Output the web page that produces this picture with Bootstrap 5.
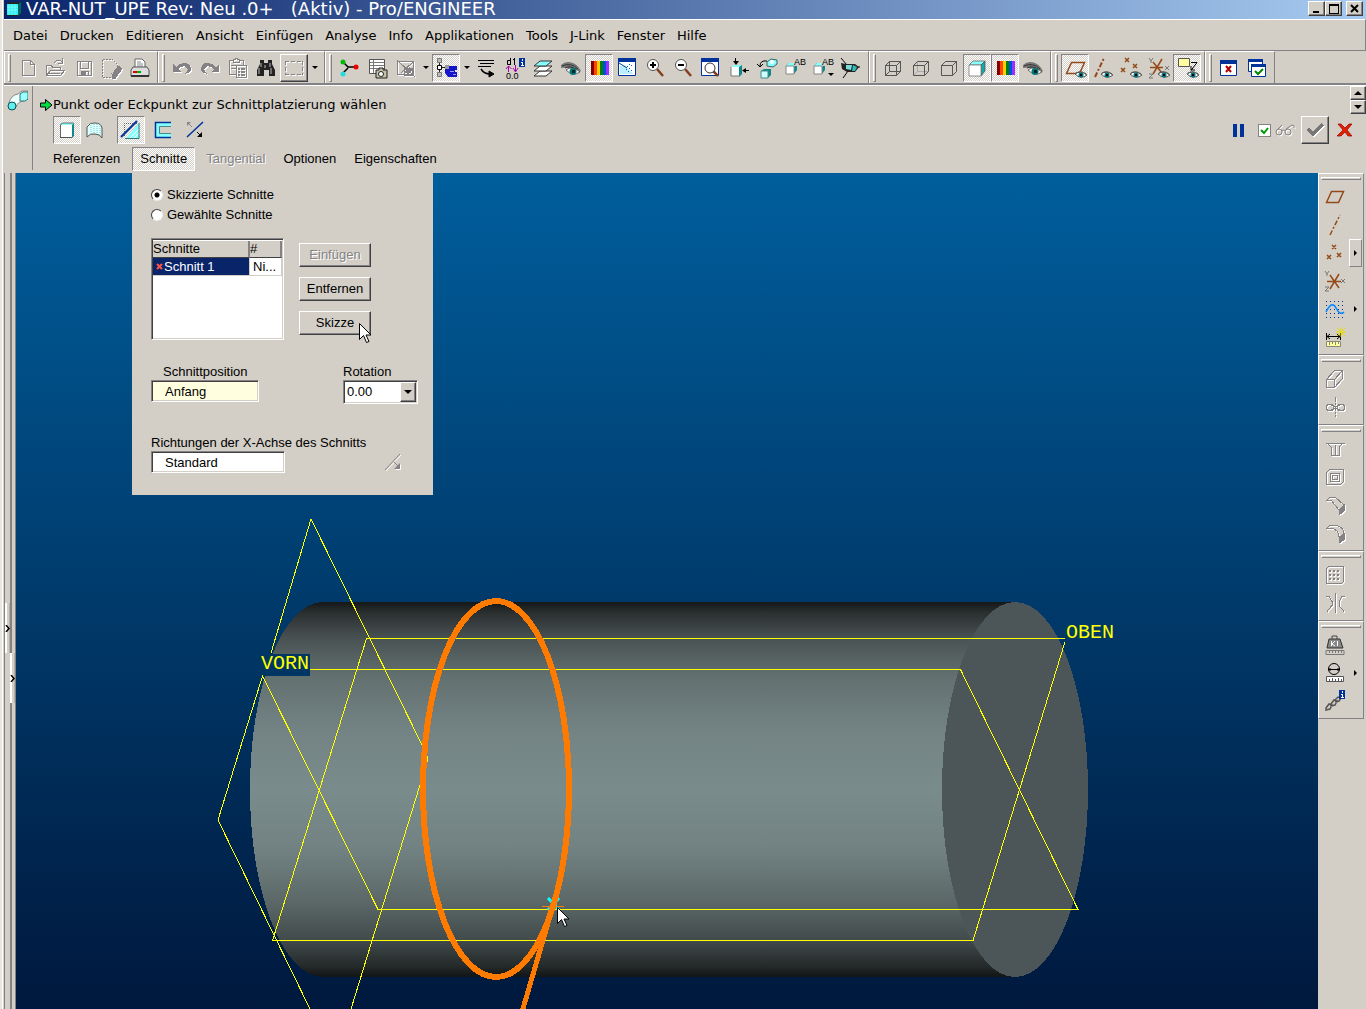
<!DOCTYPE html>
<html lang="de">
<head>
<meta charset="utf-8">
<meta name="viewport" content="width=device-width, initial-scale=1">
<title>VAR-NUT_UPE - Pro/ENGINEER</title>
<link rel="stylesheet" href="https://cdn.jsdelivr.net/npm/bootstrap@5.3.0/dist/css/bootstrap.min.css">
<style>
:root{--face:#d3cfc7;--dark:#848284;--deep:#404040;--navy:#0a246a}
body{background:var(--face);color:#000;font:13px/16px "Liberation Sans",Arial,sans-serif;overflow:hidden}
button{color:#000;padding:0;border:0;background:none;font:inherit}
.wide-face{font-family:"DejaVu Sans",Verdana,sans-serif}
.app-frame{padding-left:4px;box-shadow:inset 2px 0 0 #e8e6e0,inset 3px 0 0 #fff}
.title-strip{height:19px;background:linear-gradient(90deg,#0a246a,#a6caf0);color:#fff;padding:0 3px 2px 2px}
.title-strip h1{font-size:18px;line-height:17px;font-weight:400;white-space:pre;margin:0}
.win-btn{width:17px;height:15px}
.raised{background:var(--face);border:1px solid;border-color:#fff var(--deep) var(--deep) #fff;box-shadow:inset -1px -1px 0 var(--dark)}
.menu-strip{height:31px;border-top:1px solid #fff;border-right:1px solid var(--dark);padding:2px 0 0 3px}
.menu-strip a{color:#000;padding:0 6px;text-decoration:none}
.tool-strip{height:35px;border-top:1px solid var(--dark);border-bottom:2px solid var(--dark)}
.tool-set{border-top:1px solid #fff;border-right:1px solid var(--dark);border-left:1px solid #fff;padding-right:3px;margin:0}
.grip{width:9px;flex:none;padding:2px 3px}
.grip::before{content:"";display:block;width:3px;height:28px;border:1px solid;border-color:#fff var(--dark) var(--dark) #fff}
.tool{width:28px;height:28px;flex:none;display:flex;align-items:center;justify-content:center}
.tool svg{width:24px;height:24px;display:block}
.tool.off svg{shape-rendering:crispEdges}
.tool-drop{width:13px;height:28px;display:flex;align-items:center;justify-content:center}
.tool-drop .tri-d{border-width:3px;border-bottom:0}
.tri-d{border:4px solid transparent;border-top-color:#000;border-bottom:0}
.tri-u{border:4px solid transparent;border-bottom-color:#000;border-top:0}
.tri-r{border:4px solid transparent;border-left-color:#000;border-right:0}
.pressed{background:repeating-conic-gradient(#fff 0 25%,var(--face) 0 50%) 0 0/2px 2px;border:1px solid;border-color:var(--dark) #fff #fff var(--dark)}
.off svg,svg.off{filter:drop-shadow(1px 1px 0 #fff)}
.dash{height:88px;border-top:1px solid #fff}
.dash-side{width:29px;border-right:1px solid var(--dark);margin-bottom:3px;padding:3px 0}
.dash-main{padding:11px 0 0 7px}
.dash-row{height:28px;margin:3px 0 0 13px}
.dash-tabs{margin-top:3px;margin-left:4px;height:24px}
.dash-tabs button{height:24px;padding:0 9px}
.dash-tabs button.pressed{padding:0 7px;margin:0 2px 0 3px}
.ghost{color:var(--dark);text-shadow:1px 1px 0 #fff}
.dash-actions{height:28px;margin-top:30px;padding-right:5px}
.tick-box{appearance:none;width:13px;height:13px;margin:0;border:1px solid var(--dark);background:#fff}
.tick-wrap svg{pointer-events:none}
.spin{width:16px}
.spin button{width:16px;height:14px}
.rails{width:12px;flex:none;border-left:1px solid var(--dark);border-right:1px solid var(--dark)}
.rails::before{content:"";width:2px;height:100%;background:var(--dark);position:absolute;left:5px}
.rail-tab{width:5px;height:50px;background:linear-gradient(90deg,#fff 0 2px,var(--face) 2px 4px,#b5b0a0 4px)}
.rail-tab svg{width:5px;height:7px;display:block}
.rail-a{left:0;top:430px}
.rail-b{left:5px;top:480px}
.view{background:linear-gradient(#005e9c,#00183d)}
.view>svg{position:absolute;width:100%;height:100%}
.slide{left:116px;top:0;width:301px;background:var(--face);padding:12px 15px 22px 19px}
.pick{height:20px;gap:4px}
.pick input{appearance:none;width:12px;height:12px;margin:0;border-radius:50%;background:#fff;border:1px solid;border-color:var(--deep) #eee #eee var(--deep)}
.pick input:checked{background:radial-gradient(#000 0 2px,#fff 3px)}
.sunk{background:#fff;border:1px solid;border-color:var(--dark) #fff #fff var(--dark);box-shadow:inset 1px 1px 0 var(--deep),inset -1px -1px 0 var(--face)}
.sections{margin-top:13px;gap:15px}
.list-box{width:133px;height:102px;padding:2px 1px}
.list-box table{width:129px;table-layout:fixed;border-collapse:separate;border-spacing:0}
.list-box th{font-weight:400;height:17px;padding:0;background:var(--face);border-right:2px solid var(--dark);border-bottom:1px solid var(--deep)}
.list-box th:first-child{width:97px}
.list-box td{height:18px;padding:0 3px;border-right:1px solid var(--face);border-bottom:1px solid var(--face);white-space:nowrap}
.list-box td.picked{background:var(--navy);color:#fff}
.push-col{gap:10px;padding-top:5px}
.push{width:72px;height:24px;display:block}
.hover-arrow{right:0;top:12px}
.text-in{height:22px;padding:0 13px;border-radius:0;font:inherit}
.pos-in{width:108px;background:#ffffdf}
.dir-in{width:134px}
.dir-row{margin-top:31px}
.combo{width:75px;height:24px}
.combo select{appearance:none;width:100%;height:100%;padding:0 3px;border-radius:0;font:inherit;color:#000}
.combo .raised{right:2px;top:2px;width:16px;height:20px;pointer-events:none}
.flyout{width:48px;flex:none;padding-right:2px}
.side-set{border:1px solid;border-color:#fff var(--dark) var(--dark) #fff;padding-bottom:3px}
.side-grip{height:9px;padding:3px 2px}
.side-grip::before{content:"";display:block;height:3px;border:1px solid;border-color:#fff var(--dark) var(--dark) #fff}
.side-set .tool{margin-left:2px}
.more{width:13px;height:28px}
.more .tri-r{border-width:3px;border-right:0}
.more.raised{border-right-color:var(--dark);border-bottom-color:var(--dark);box-shadow:none}
.cad{font-family:"Liberation Mono",monospace;font-size:20px;fill:#ff0}
.ico{font-family:"Liberation Sans",sans-serif;font-size:9px}
</style>
</head>
<body>
<svg width="0" height="0" class="position-absolute" aria-hidden="true">
  <defs>
    <symbol id="eye" viewBox="0 0 24 24"><path d="M2 9Q7 4 14 7Q19 9 22 15L19 17Q12 11 2 12Z" fill="#777"/><path d="M3 10Q12 6 19 13M6 12Q11 9 18 14" stroke="#333" fill="none"/><path d="M7 14Q13 9 21 16Q14 21 7 14Z" fill="#fff" stroke="#333" stroke-width=".7"/><circle cx="14" cy="15.500" r="3.500" fill="#077"/><path d="M13 14h3v3h-3z" fill="#022"/></symbol>
    <symbol id="mini-eye" viewBox="0 0 12 8"><path d="M0 3Q5-1 12 4Q6 9 0 3Z" fill="#fff" stroke="#555"/><circle cx="6" cy="4" r="2.500" fill="#077"/><path d="M5 3h2v2H5z" fill="#002"/><path d="M1 2Q6-1 11 3" stroke="#555" fill="none"/></symbol>
    <symbol id="rainbow" viewBox="0 0 24 24"><path d="M4 5h3v14H4z" fill="#840000"/><path d="M7 5h3v14H7z" fill="#f40"/><path d="M10 5h3v14h-3z" fill="#ffce00"/><path d="M13 5h3v14h-3z" fill="#008200"/><path d="M16 5h3v14h-3z" fill="#0050e0"/><path d="M19 5h3v14h-3z" fill="#9a30ff"/></symbol>
    <symbol id="solid" viewBox="0 0 24 24"><path d="M4 9l4-4h12l-4 4z" fill="#8ff" stroke="#666" stroke-width=".8"/><path d="M16 9l4-4v10l-4 5z" fill="#1aa" stroke="#555" stroke-width=".8"/><path d="M4 9h12v11H4z" fill="#fff" stroke="#777" stroke-width=".8"/></symbol>
    <symbol id="info-tag" viewBox="0 0 6 9"><path d="M0 0h6v9H0z" fill="#003399"/><path d="M3 1h1v2H3zM2 4h2v3h1v1H2V7h1V5H2z" fill="#fff"/></symbol>
    <symbol id="pointer" viewBox="0 0 12 20"><path d="M.5.5v16l4-4 3 7 2.500-1-3-6.500h5z" fill="#fff" stroke="#000"/></symbol>
  </defs>
</svg>

<div class="app-frame vh-100 d-flex flex-column">
  <header class="title-strip wide-face d-flex align-items-center">
    <svg width="16" height="16" class="me-1" aria-hidden="true"><path d="M1 3l3-2h11v11l-3 3H1z" fill="#222"/><path d="M1 3h11v11H1z" fill="#3ee"/><path d="M12 3l3-2v11l-3 3z" fill="#066"/><path d="M3 3v11M6 3v11M9 3v11M1 6h11M1 9h11" stroke="#9ff" stroke-width=".6"/></svg>
    <h1>VAR-NUT_UPE Rev: Neu .0+   (Aktiv) - Pro/ENGINEER</h1>
    <div class="d-flex ms-auto">
      <button class="win-btn raised d-flex" aria-label="Minimieren"><svg width="15" height="13"><path d="M4 9h6v2H4z"/></svg></button>
      <button class="win-btn raised d-flex" aria-label="Maximieren"><svg width="15" height="13" shape-rendering="crispEdges"><path d="M3 2h9v9H3zM3 3h9" fill="none" stroke="#000"/></svg></button>
      <button class="win-btn raised d-flex ms-1" aria-label="Schließen"><svg width="15" height="13"><path d="M4 3l7 7M11 3l-7 7" stroke="#000" stroke-width="2"/></svg></button>
    </div>
  </header>

  <nav class="menu-strip wide-face d-flex align-items-center" aria-label="Menü">
    <a href="#">Datei</a><a href="#">Drucken</a><a href="#">Editieren</a><a href="#">Ansicht</a><a href="#">Einfügen</a><a href="#">Analyse</a><a href="#">Info</a><a href="#">Applikationen</a><a href="#">Tools</a><a href="#">J-Link</a><a href="#">Fenster</a><a href="#">Hilfe</a>
  </nav>

  <div class="tool-strip d-flex" role="toolbar" aria-label="Werkzeuge">
    <div class="tool-set d-flex align-items-center"><span class="grip"></span>
      <button class="tool off" aria-label="Neu"><svg viewBox="0 0 24 24" fill="none" stroke="#848284"><path d="M6.500 4.500h8l4 4v11h-12zM14.500 4.500v4h4"/></svg></button>
      <button class="tool off" aria-label="Öffnen"><svg viewBox="0 0 24 24" fill="none" stroke="#848284"><path d="M2.500 19.500v-10h5l1 2h8v3M2.500 19.500l4-5h14l-4 5zM10 7q4-5 8-1M18.500 2v5h-5M5 17h11"/></svg></button>
      <button class="tool off" aria-label="Speichern"><svg viewBox="0 0 24 24" fill="none" stroke="#848284"><path d="M5.500 5.500h14v14h-14z"/><path d="M8.500 5.500v7h8v-7M9 15.500h7v4H9z"/><path d="M10 16h3v3h-3z" fill="#848284"/></svg></button>
      <button class="tool off" aria-label="Löschen"><svg viewBox="0 0 24 24" fill="none" stroke="#848284"><path d="M2.500 3.500h10l5 5v3M2.500 3.500v18h10" stroke-dasharray="2 1"/><path d="M13 17l6-7 3 3-6 8z" fill="#848284"/><path d="M12 18l4 4-3 1z" fill="#848284"/></svg></button>
      <button class="tool" aria-label="Drucken"><svg viewBox="0 0 24 24"><path d="M7 12V3h7l3 3v6z" fill="#fff" stroke="#666"/><path d="M9 6h4M9 8h6M9 10h6" stroke="#888"/><path d="M5 11h14l2 3v6H3v-6z" fill="#ddd" stroke="#555"/><path d="M3 19h18v2H3z" fill="#333"/><path d="M5 15h4v2H5z" fill="#d00"/><path d="M9 15h4v2H9z" fill="#0a0"/></svg></button>
    </div>
    <div class="tool-set d-flex align-items-center"><span class="grip"></span>
      <button class="tool off" aria-label="Rückgängig"><svg viewBox="0 0 24 24"><path d="M3 8v8h8l-3-3q6-5 9-1 2 3-3 6 7-1 7-5-1-7-8-6-4 1-7 4z" fill="#848284"/></svg></button>
      <button class="tool off" aria-label="Wiederholen"><svg viewBox="0 0 24 24"><path d="M21 8v8h-8l3-3q-6-5-9-1-2 3 3 6-7-1-7-5 1-7 8-6 4 1 7 4z" fill="#848284"/></svg></button>
      <button class="tool off" aria-label="Einfügen"><svg viewBox="0 0 24 24" fill="none" stroke="#848284"><path d="M10 18.500H3.500v-14H7M14 4.500h3.500V9M7.500 6.500v-3h2v-1h2v1h2v3zM5 9.500h8M5 12.500h5"/><path d="M10.500 9.500h10v12h-10z"/><path d="M12 13h2M15 13h4M12 16h2M15 16h4M12 19h2M15 19h4" stroke-width="2"/></svg></button>
      <button class="tool" aria-label="Suchen"><svg viewBox="0 0 24 24"><path d="M6 4h4v3h4V4h4v4l3 6v6h-6v-6H10v6H3v-6l3-6z" fill="#222"/><path d="M7 7v4M5 12v6M16 7v4M17 12v6M11 9v3" stroke="#bbb"/></svg></button>
      <button class="tool raised off" aria-label="Auswahlrahmen"><svg viewBox="0 0 24 24" fill="none" stroke="#848284"><path d="M3 5.500h18M3 18.500h18M3.500 5v14M20.500 5v14" stroke-dasharray="4 2"/></svg></button>
      <button class="tool-drop" aria-label="Auswahl"><i class="tri-d"></i></button>
    </div>
    <div class="tool-set d-flex align-items-center"><span class="grip"></span>
      <button class="tool" aria-label="Struktur"><svg viewBox="0 0 24 24"><path d="M6 6l5 5h9M11 12l-5 5" stroke="#000" fill="none" stroke-width="1.500"/><circle cx="6" cy="6" r="2.500" fill="#0b0"/><circle cx="19" cy="11" r="2.500" fill="#e00"/><circle cx="6" cy="18" r="2.500" fill="#2dd"/></svg></button>
      <button class="tool" aria-label="Tabellenbild"><svg viewBox="0 0 24 24"><path d="M4.500 3.500h15v14h-15z" fill="#fff" stroke="#555"/><path d="M5 6.500h14M5 9.500h14M5 12.500h14M8.500 4v13" stroke="#777"/><path d="M11 14h3v-2h4v2h4v8H11z" fill="#c5c1a5" stroke="#222"/><circle cx="16" cy="18" r="2.500" fill="#fff" stroke="#222"/></svg></button>
      <button class="tool off" aria-label="Skizzierebene"><svg viewBox="0 0 24 24" fill="none" stroke="#848284"><path d="M4.500 5.500h16v13h-16zM4 4l18 17M8 17l12-11"/><path d="M11.500 12.500h8v7h-8z"/><path d="M12 17l5-5M14 18l5-5" stroke-width="2"/></svg></button>
      <button class="tool-drop" aria-label="Mehr"><i class="tri-d"></i></button>
      <button class="tool pressed" aria-label="Modellbaum"><svg viewBox="0 0 24 24"><path d="M5.500 4v15M6 11.500h7" stroke="#222"/><path d="M3.500 2.500h4v4h-4zM3.500 16.500h4v4h-4z" fill="#bbb" stroke="#777"/><path d="M3.500 9.500h4v4h-4z" fill="#fff" stroke="#000"/><path d="M11 12h4v-2h8v4h-2v2h2v5H14l-3-4z" fill="#1414c8"/><path d="M16 15h4v1h-4zM19 18h3v1h-3z" fill="#99f"/><path d="M11 9h4v4h-4z" fill="#999"/></svg></button>
      <button class="tool-drop" aria-label="Mehr"><i class="tri-d"></i></button>
      <button class="tool" aria-label="Reihenfolge"><svg viewBox="0 0 24 24" fill="none" stroke="#000"><path d="M3 4.500h16M5 7.500h14M3 10.500h13"/><path d="M6 13q3 5 9 5" stroke-width="1.500"/><path d="M14 15l5 3-5 3z" fill="#000"/></svg></button>
      <button class="tool" aria-label="Maße umschalten"><svg viewBox="0 0 24 24"><path d="M7.500 2v7M7 4.500H4.500v4H7M11.500 2v7M10 3.500h2" stroke="#000" fill="none"/><path d="M5.500 10v6M3 13l2.500-3 3 3M12.500 9v6M10 12l2.500 4 2.500-4" stroke="#a0a" fill="none"/><text x="3" y="23" class="ico">0.0</text><use href="#info-tag" x="16" y="2" width="6" height="9"/></svg></button>
      <button class="tool" aria-label="Layer"><svg viewBox="0 0 24 24" stroke="#333"><path d="M3 20l6-5h12l-6 5z" fill="#fff"/><path d="M3 15l6-5h12l-6 5z" fill="#fff"/><path d="M3 10l6-5h12l-6 5z" fill="#8ff"/></svg></button>
      <button class="tool" aria-label="Sichtbarkeit"><svg><use href="#eye"/></svg></button>
      <button class="tool pressed" aria-label="Farben"><svg><use href="#rainbow"/></svg></button>
      <button class="tool" aria-label="Neu zeichnen"><svg viewBox="0 0 24 24"><path d="M3.500 3.500h17v16h-17z" fill="#fff" stroke="#039"/><path d="M3 2h18v4H3z" fill="#039"/><path d="M5 18V10l5-1 8 9z" fill="#bef"/><path d="M14 8h1v1h-1zM12 10h1v1h-1zM16 9h1v1h-1zM14 12h1v1h-1zM11 13h1v1h-1zM13 15h1v1h-1zM16 14h1v1h-1z" fill="#06c"/><path d="M4 7l8 5" stroke="#049"/></svg></button>
      <button class="tool" aria-label="Vergrößern"><svg viewBox="0 0 24 24"><path d="M14 13l6 7" stroke="#853f20" stroke-width="2.500"/><circle cx="10" cy="9" r="5.500" fill="#fff" stroke="#555"/><path d="M7 9h6M10 6v6" stroke="#000" stroke-width="2"/></svg></button>
      <button class="tool" aria-label="Verkleinern"><svg viewBox="0 0 24 24"><path d="M14 13l6 7" stroke="#853f20" stroke-width="2.500"/><circle cx="10" cy="9" r="5.500" fill="#fff" stroke="#555"/><path d="M7 9h6" stroke="#000" stroke-width="2"/></svg></button>
      <button class="tool" aria-label="Einpassen"><svg viewBox="0 0 24 24"><path d="M2.500 3.500h17v16h-17z" fill="#fff" stroke="#039"/><path d="M2 2h18v4H2z" fill="#039"/><path d="M14 15l5 5" stroke="#853f20" stroke-width="2.500"/><circle cx="11" cy="12" r="5" fill="#fff" stroke="#333"/></svg></button>
      <button class="tool" aria-label="Orientieren"><svg viewBox="0 0 24 24"><path d="M4 11l3-2h8l-3 2z" fill="#8ff"/><path d="M12 11l3-2v9l-3 3z" fill="#188"/><path d="M4 11h8v9H4z" fill="#fff"/><path d="M4 11v9h8" stroke="#777" fill="none"/><path d="M8.500 2v5M22 14.500h-5" stroke="#000"/><path d="M6 5h6l-3 4zM19 12v5l-4-2.500z"/></svg></button>
      <button class="tool" aria-label="Drehen"><svg viewBox="0 0 24 24"><path d="M12 6l4-3 6 1v4l-4 3-6-1z" fill="#8ff" stroke="#366"/><circle cx="17" cy="6" r="2" fill="#fff"/><path d="M12 5Q5 4 5 10M2 8l3 3 3-3" stroke="#000" fill="none"/><path d="M6 15l3-2h7v6l-3 3H6z" fill="#188"/><path d="M6 15h7v7H6z" fill="#cff" stroke="#488"/></svg></button>
      <button class="tool" aria-label="Ansichten"><svg viewBox="0 0 24 24"><path d="M3 10l3-3h8v7l-3 4z" fill="#188"/><path d="M3 10l3-3h8l-3 3z" fill="#8ff"/><path d="M3 10h8v8H3z" fill="#fff" stroke="#888"/><path d="M11 0h12v10H11z" fill="#d3cfc7"/><text x="11" y="9" class="ico">AB</text></svg></button>
      <button class="tool" aria-label="Ansichtsliste"><svg viewBox="0 0 24 24"><path d="M3 10l3-3h8v7l-3 4z" fill="#188"/><path d="M3 10l3-3h8l-3 3z" fill="#8ff"/><path d="M3 10h8v8H3z" fill="#fff" stroke="#888"/><path d="M11 0h12v10H11z" fill="#d3cfc7"/><text x="11" y="9" class="ico">AB</text><path d="M17 17h6l-3 3z"/></svg></button>
      <button class="tool" aria-label="Ansichtsmanager"><svg viewBox="0 0 24 24"><path d="M2 2l6 7M21 11h-4M4 22l5-7" stroke="#000"/><path d="M2 7l5 1h9l4 3-4 5H8l-5-3z" fill="#222"/><path d="M7 9l6 0-1 5-5-1z" fill="#7dd"/><path d="M14 9l4 2-2 4-3 0z" fill="#3bb"/></svg></button>
    </div>
    <div class="tool-set d-flex align-items-center"><span class="grip"></span>
      <button class="tool" aria-label="Drahtmodell"><svg viewBox="0 0 24 24" fill="none" stroke="#555"><path d="M4.500 9.500h11v10h-11zM8.500 5.500h11v10h-11zM4.500 9.500l4-4M15.500 9.500l4-4M15.500 19.500l4-4M4.500 19.500l4-4"/></svg></button>
      <button class="tool" aria-label="Verdeckte Linie"><svg viewBox="0 0 24 24" fill="none" stroke="#555"><path d="M8.500 6v9.500h11M4.500 19.500l4-4" stroke="#aaa"/><path d="M4.500 9.500h11v10h-11zM4.500 9.500l4-4h11v10l-4 4M15.500 9.500l4-4"/></svg></button>
      <button class="tool" aria-label="Keine verdeckten"><svg viewBox="0 0 24 24" fill="none" stroke="#555"><path d="M4.500 9.500h11v10h-11zM4.500 9.500l4-4h11v10l-4 4M15.500 9.500l4-4"/></svg></button>
      <button class="tool pressed" aria-label="Schattiert"><svg><use href="#solid"/></svg></button>
      <button class="tool pressed" aria-label="Farbig"><svg><use href="#rainbow"/></svg></button>
      <button class="tool" aria-label="Anzeige"><svg><use href="#eye"/></svg></button>
    </div>
    <div class="tool-set d-flex align-items-center"><span class="grip"></span>
      <button class="tool pressed" aria-label="Ebenen"><svg viewBox="0 0 24 24"><path d="M3.500 17.500l5-11h13l-5 11z" fill="none" stroke="#944a18" stroke-width="1.500"/><use href="#mini-eye" x="12" y="15" width="12" height="8"/></svg></button>
      <button class="tool" aria-label="Achsen"><svg viewBox="0 0 24 24"><path d="M4 21L13 2" stroke="#944a18" stroke-width="2" stroke-dasharray="5 2 2 2"/><use href="#mini-eye" x="10" y="15" width="12" height="8"/></svg></button>
      <button class="tool" aria-label="Punkte"><svg viewBox="0 0 24 24"><path d="M6 2l4 4M10 2l-4 4M2 12l4 4M6 12l-4 4M14 8l4 4M18 8l-4 4" stroke="#944a18" stroke-width="1.500"/><use href="#mini-eye" x="11" y="15" width="12" height="8"/></svg></button>
      <button class="tool" aria-label="Koordinatensysteme"><svg viewBox="0 0 24 24"><path d="M3 11.500h13M6 6l9 11M15 3L6 18" stroke="#944a18" stroke-width="1.500"/><path d="M2 2l2 3 2-3M4 5v2M2 18h4l-4 4h4M18 10l4 4M22 10l-4 4" stroke="#777" fill="none"/><use href="#mini-eye" x="11" y="15" width="12" height="8"/></svg></button>
      <button class="tool pressed" aria-label="Notizen"><svg viewBox="0 0 24 24"><path d="M3.500 2.500h11v8h-11z" fill="#ffffa0" stroke="#555"/><path d="M16 6.500h6l-6 8M16 10v4h4" stroke="#000" fill="none"/><use href="#mini-eye" x="12" y="15" width="12" height="8"/></svg></button>
    </div>
    <div class="tool-set d-flex align-items-center"><span class="grip"></span>
      <button class="tool" aria-label="Fenster schließen"><svg viewBox="0 0 24 24"><path d="M3.500 4.500h16v15h-16z" fill="#fff" stroke="#039"/><path d="M3 4h17v4H3z" fill="#039"/><path d="M9 10l5 6M14 10l-5 6" stroke="#b00000" stroke-width="2"/></svg></button>
      <button class="tool" aria-label="Fenster aktivieren"><svg viewBox="0 0 24 24"><path d="M3.500 4.500h14v11h-14z" fill="#fff" stroke="#039"/><path d="M3 3h15v3H3z" fill="#039"/><path d="M6.500 9.500h14v11h-14z" fill="#fff" stroke="#039"/><path d="M6 8h15v3H6z" fill="#039"/><path d="M10 15l3 3 5-5" stroke="#080" stroke-width="2" fill="none"/></svg></button>
    </div>
  </div>

  <section class="dash d-flex">
    <div class="dash-side"><svg width="24" height="24"><path d="M5 14Q7 6 14 5l4-3h6v7l-4 3Q14 12 12 18z" fill="#eff" stroke="#888"/><path d="M16 5l3-2h5v7l-3 2h-5z" fill="#9ff" stroke="#377"/><circle cx="8" cy="17" r="4" fill="#6ee" stroke="#055"/></svg></div>
    <div class="dash-main flex-grow-1">
      <div class="wide-face d-flex align-items-center"><svg width="13" height="14" class="flex-shrink-0" aria-hidden="true"><path d="M.500 5h5V1.500L12 7l-6.500 5.500V9h-5z" fill="#0d4" stroke="#000"/></svg><span>Punkt oder Eckpunkt zur Schnittplatzierung wählen</span></div>
      <div class="dash-row d-flex">
        <button class="tool pressed" aria-label="Körper"><svg viewBox="0 0 24 24"><path d="M5 7l2-2h12v13l-2 2z" fill="#188"/><path d="M5 7l2-2h12l-2 2z" fill="#8ff"/><path d="M5 7h12v12H5z" fill="#fff"/><path d="M5.500 20V7l2-2h11" fill="none" stroke="#666"/><path d="M5 19.500h12" stroke="#555"/></svg></button>
        <button class="tool me-2" aria-label="Fläche"><svg viewBox="0 0 24 24"><path d="M4 19V9Q7 4 12 5q6 0 7 5v10q-2-4-7-4-5-1-8 3z" fill="#dff" stroke="#555"/><path d="M8 7v9M11 6v9M14 6v9M17 8v9" stroke="#7cc" stroke-dasharray="1 1"/></svg></button>
        <button class="tool pressed me-1" aria-label="Schnitt"><svg viewBox="0 0 24 24"><path d="M6 21L20 5v16z" fill="#8ff"/><path d="M11 20l9-9M15 20l5-5" stroke="#fff"/><path d="M6 20.500h14V5" stroke="#377" fill="none"/><path d="M5.500 18V5.500H18" stroke="#555" fill="none" stroke-dasharray="1 1"/><path d="M2 19L18 3" stroke="#039" stroke-width="2"/></svg></button>
        <button class="tool me-1" aria-label="Dünn"><svg viewBox="0 0 24 24"><path d="M4 4h16v4H8v8h12v4H4z" fill="#8ff"/><path d="M20 4.500H4.500v15H20" fill="none" stroke="#039" stroke-width="1.500"/><path d="M20 8.500H8.500v7H20" fill="none" stroke="#488"/></svg></button>
        <button class="tool" aria-label="Umkehren"><svg viewBox="0 0 24 24"><path d="M4 19L20 4" stroke="#039" stroke-width="1.500"/><path d="M5 5l4 4" stroke="#888"/><path d="M4 8V4h4z" fill="#888"/><path d="M14 14l4 4" stroke="#000"/><path d="M19 14v5h-5z"/></svg></button>
      </div>
      <div class="dash-tabs d-flex">
        <button>Referenzen</button><button class="pressed">Schnitte</button><button class="ghost" disabled>Tangential</button><button>Optionen</button><button>Eigenschaften</button>
      </div>
    </div>
    <div class="dash-actions d-flex align-items-center">
      <button class="me-2 pe-1" aria-label="Pause"><svg width="14" height="16" class="d-block"><path d="M1 2h4v13H1zM8 2h4v13H8z" fill="#039"/></svg></button>
      <label class="tick-wrap position-relative d-flex align-items-center"><input class="tick-box" type="checkbox" checked aria-label="Vorschau"><svg class="position-absolute start-0" width="13" height="13"><path d="M3 6l3 3 4-5" stroke="#090" stroke-width="2" fill="none"/></svg>
      <svg class="off ms-1" width="22" height="14" fill="none" stroke="#848284"><circle cx="4" cy="9" r="3"/><circle cx="13" cy="9" r="3"/><path d="M7 8q1-2 3 0M2 7l5-5M11 6l6-4q3 0 2 3"/></svg></label>
      <button class="tool raised off ms-1" aria-label="Übernehmen"><svg viewBox="0 0 24 24"><path d="M3 12l3-2 4 4 8-9 3 2-11 12z" fill="#777"/></svg></button>
      <button class="mx-2" aria-label="Abbrechen"><svg width="16" height="16" class="d-block"><path d="M1 2h3l4 4 4-4h3L10 8l5 6h-4l-3-4-4 4H0l6-6z" fill="#e02000" stroke="#900" stroke-width=".7"/></svg></button>
    </div>
    <div class="position-relative"><div class="spin position-absolute end-0 top-0">
      <button class="raised d-flex align-items-center justify-content-center" aria-label="Auf"><i class="tri-u"></i></button>
      <button class="raised d-flex align-items-center justify-content-center" aria-label="Ab"><i class="tri-d"></i></button></div></div>
  </section>

  <main class="d-flex flex-grow-1 overflow-hidden">
    <div class="rails position-relative">
      <button class="rail-tab rail-a position-absolute" aria-label="Navigator"><svg><path d="M1 0l3 3.500L1 7" stroke="#000" stroke-width="1.500" fill="none"/></svg></button>
      <button class="rail-tab rail-b position-absolute" aria-label="Browser"><svg><path d="M1 0l3 3.500L1 7" stroke="#000" stroke-width="1.500" fill="none"/></svg></button>
    </div>
    <div class="view position-relative flex-grow-1 overflow-hidden">
      <svg viewBox="16 173 1302 836" preserveAspectRatio="xMinYMin slice" role="img" aria-label="Zylindermodell">
        <defs><linearGradient id="shell" x1="0" x2="0" y1="0" y2="1"><stop offset="0" stop-color="#151818"/><stop offset=".03" stop-color="#2b3031"/><stop offset=".1" stop-color="#4a5354"/><stop offset=".2" stop-color="#637070"/><stop offset=".35" stop-color="#748485"/><stop offset=".5" stop-color="#7a8b8c"/><stop offset=".65" stop-color="#738383"/><stop offset=".8" stop-color="#5c6868"/><stop offset=".9" stop-color="#424b4c"/><stop offset=".97" stop-color="#252a2a"/><stop offset="1" stop-color="#121515"/></linearGradient></defs>
        <path d="M323 602H1015V977H323A73 187.500 0 0 1 323 602Z" fill="url(#shell)" shape-rendering="crispEdges"/>
        <ellipse cx="1015" cy="789.500" rx="73" ry="187.500" fill="#4c5658" shape-rendering="crispEdges"/>
        <g fill="none" stroke="#ff0" shape-rendering="crispEdges">
          <path d="M271 653L311 519L424 749L428 759L420 785L351 1009"/>
          <path d="M310 1009L218 820L262.500 676L378 909.500H1078L960.500 669.500H310"/>
          <path d="M1065 642L973 940.500H272.500L366.500 638.500H1065"/>
        </g>
        <path d="M267 654H310V676H263V662Z" fill="#003663"/>
        <text class="cad" x="261" y="669">VORN</text>
        <text class="cad" x="1066" y="638">OBEN</text>
        <path d="M548 898l11 12M559 898l-11 12" stroke="#0ff" stroke-width="3"/>
        <g fill="none" stroke="#ff7b00" shape-rendering="crispEdges"><ellipse cx="496" cy="789" rx="73" ry="188" stroke-width="6"/><path d="M553 906L522 1012" stroke-width="5"/><path d="M542 906.500h22"/></g>
        <use href="#pointer" x="557" y="907" width="12" height="20"/>
      </svg>
      <form class="slide position-absolute">
        <div class="pick d-flex align-items-center"><input type="radio" name="mode" id="m1" checked><label for="m1">Skizzierte Schnitte</label></div>
        <div class="pick d-flex align-items-center"><input type="radio" name="mode" id="m2"><label for="m2">Gewählte Schnitte</label></div>
        <div class="sections d-flex">
          <div class="list-box sunk">
            <table>
              <thead><tr><th>Schnitte</th><th>#</th></tr></thead>
              <tbody><tr><td class="picked"><svg width="8" height="8" class="align-baseline"><path d="M1 1l5 5M6 1L1 6" stroke="#f54" stroke-width="2"/></svg>Schnitt 1</td><td>Ni...</td></tr></tbody>
            </table>
          </div>
          <div class="push-col d-flex flex-column">
            <button type="button" class="push raised ghost" disabled>Einfügen</button>
            <button type="button" class="push raised">Entfernen</button>
            <div class="position-relative"><button type="button" class="push raised">Skizze</button>
              <svg class="hover-arrow position-absolute" width="12" height="20"><use href="#pointer"/></svg></div>
          </div>
        </div>
        <div class="d-flex justify-content-between mt-4">
          <div><label for="pos" class="d-block ps-2 ms-1">Schnittposition</label><input id="pos" class="text-in pos-in sunk d-block" value="Anfang"></div>
          <div><label for="rot" class="d-block">Rotation</label>
            <div class="combo position-relative"><select id="rot" class="sunk"><option>0.00</option></select><span class="raised position-absolute d-flex align-items-center justify-content-center"><i class="tri-d"></i></span></div></div>
        </div>
        <div class="dir-row"><label for="dir" class="d-block">Richtungen der X-Achse des Schnitts</label>
          <div class="d-flex align-items-center justify-content-between pe-3"><input id="dir" class="text-in dir-in sunk" value="Standard">
          <button type="button" class="off" aria-label="Richtung umkehren"><svg width="18" height="18" class="d-block"><path d="M1 17L16 1M10 9l5 5" stroke="#848284"/><path d="M16 10v6h-6z" fill="#848284"/></svg></button></div></div>
      </form>
    </div>
    <aside class="flyout" aria-label="Konstruktionselemente">
      <div class="side-set"><div class="side-grip"></div>
        <button class="tool" aria-label="Ebene"><svg viewBox="0 0 24 24"><path d="M3.500 17.500l5-11h12l-5 11z" fill="none" stroke="#944a18" stroke-width="1.500"/></svg></button>
        <button class="tool" aria-label="Achse"><svg viewBox="0 0 24 24"><path d="M7 22L17 2" stroke="#944a18" stroke-width="1.500" stroke-dasharray="5 2 2 2"/></svg></button>
        <div class="d-flex"><button class="tool" aria-label="Punkt"><svg viewBox="0 0 24 24"><path d="M9 4l4 4M13 4l-4 4M4 14l4 4M8 14l-4 4M14 12l4 4M18 12l-4 4" stroke="#944a18" stroke-width="1.500"/></svg></button><button class="more raised d-flex align-items-center justify-content-center" aria-label="Mehr Punkte"><i class="tri-r"></i></button></div>
        <button class="tool" aria-label="Koordinatensystem"><svg viewBox="0 0 24 24"><path d="M4 12.500h14M7 6l9 13M16 5L7 20" stroke="#944a18" stroke-width="1.500"/><path d="M2 2l2 3 2-3M4 5v2M2 18h4l-4 4h4M18 10l4 4M22 10l-4 4" stroke="#777" fill="none"/></svg></button>
        <div class="d-flex"><button class="tool" aria-label="Kurve"><svg viewBox="0 0 24 24"><path d="M3 4.500h18M3 8.500h18M3 12.500h18M3 16.500h18M3 20.500h18" stroke="#039" stroke-dasharray="1 3"/><path d="M3 15Q9 3 13 11t8 4" stroke="#08f" stroke-width="1.500" fill="none"/></svg></button><button class="more d-flex align-items-center justify-content-center" aria-label="Mehr Kurven"><i class="tri-r"></i></button></div>
        <button class="tool" aria-label="Bemaßung"><svg viewBox="0 0 24 24"><path d="M3.500 8v7M17.500 8v7M4 11.500h13M7 9l-3 2.500 3 2.500M14 9l3 2.500-3 2.500" stroke="#000" fill="none"/><path d="M3.500 16.500h14v5h-14z" fill="#ffffa0" stroke="#887"/><path d="M6.500 17v3M9.500 17v2M12.500 17v3M15.500 17v2" stroke="#887"/><path d="M18 2v10M13 7h10M14 3l8 8M22 3l-8 8" stroke="#e8dc00"/></svg></button>
      </div>
      <div class="side-set"><div class="side-grip"></div>
        <button class="tool off" aria-label="Profil"><svg viewBox="0 0 24 24" fill="none" stroke="#848284"><path d="M3.500 12.500h8v8h-8zM3.500 12.500l8-9h8v8l-8 9M11.500 12.500l8-9"/></svg></button>
        <button class="tool off" aria-label="Drehen"><svg viewBox="0 0 24 24" fill="none" stroke="#848284"><path d="M12.500 2v20" stroke-dasharray="5 1 2 1"/><circle cx="7" cy="12.500" r="3.500"/><circle cx="18" cy="12.500" r="3.500"/><path d="M7 9l11 7M7 16l11-7"/></svg></button>
      </div>
      <div class="side-set"><div class="side-grip"></div>
        <button class="tool off" aria-label="Bohrung"><svg viewBox="0 0 24 24" fill="none" stroke="#848284"><path d="M3 6.500h19M5 7l3 3v8h8v-8l3-3M12.500 8v10"/></svg></button>
        <button class="tool off" aria-label="Schale"><svg viewBox="0 0 24 24" fill="none" stroke="#848284"><path d="M3.500 7.500l3-3h14v12l-3 3h-14zM7.500 8.500h9v8h-9zM9.500 10.500h5v4h-5z"/></svg></button>
        <button class="tool off" aria-label="Schräge"><svg viewBox="0 0 24 24" fill="none" stroke="#848284"><path d="M4 7l3-3h5l9 8-5 5L8 7z"/><path d="M16 17l5-5v6l-5 4z" fill="#848284"/></svg></button>
        <button class="tool off" aria-label="Rundung"><svg viewBox="0 0 24 24" fill="none" stroke="#848284"><path d="M4 7l3-3h5Q21 6 21 13l-5 3Q16 9 8 7z"/><path d="M16 16l5-3v6l-5 3z" fill="#848284"/></svg></button>
      </div>
      <div class="side-set"><div class="side-grip"></div>
        <button class="tool off" aria-label="Muster"><svg viewBox="0 0 24 24" fill="none" stroke="#848284"><path d="M3.500 5.500l2-2h15v15l-2 2h-15z"/><path d="M6 8h11M6 12h11M6 16h11" stroke-width="2" stroke-dasharray="2 2"/></svg></button>
        <button class="tool off" aria-label="Spiegeln"><svg viewBox="0 0 24 24" fill="none" stroke="#848284"><path d="M12.500 2v20M3 5.500h3l3 5v4l-5 6M22 5.500h-3l-3 5v4l5 6"/></svg></button>
      </div>
      <div class="side-set"><div class="side-grip"></div>
        <button class="tool" aria-label="Masse"><svg viewBox="0 0 24 24"><path d="M6 6h11l3 9H4z" fill="#888" stroke="#333"/><path d="M9 6V3h5v3" stroke="#444" fill="none"/><path d="M8.500 8v5M12 8l-3 3 3 2M14.500 8v5" stroke="#fff" fill="none"/><path d="M3 17.500h18v4H3zM6.500 18v2M9.500 18v2M12.500 18v2M15.500 18v2M18.500 18v2" stroke="#777" fill="none"/></svg></button>
        <div class="d-flex"><button class="tool" aria-label="Messen"><svg viewBox="0 0 24 24"><circle cx="11" cy="8" r="5.500" fill="none" stroke="#000"/><path d="M5 8.500h12" stroke="#000"/><path d="M7 7v3M15 7v3" stroke="#000"/><path d="M3.500 15.500h17v5h-17z" fill="#fff" stroke="#555"/><path d="M6.500 18v2M9.500 17v3M12.500 18v2M15.500 17v3M18.500 18v2" stroke="#555"/></svg></button><button class="more d-flex align-items-center justify-content-center" aria-label="Mehr Messungen"><i class="tri-r"></i></button></div>
        <button class="tool" aria-label="Beziehungen"><svg viewBox="0 0 24 24" fill="none" stroke="#555"><path d="M3 19l3-4 3 1-2 4-4 1zM8 15l3-4 3 1-2 4-4 1zM12 11l3-3 3 1-2 3-3 1z" stroke-width="1.500"/><use href="#info-tag" x="16" y="1" width="6" height="9" stroke="none"/></svg></button>
      </div>
    </aside>
  </main>
</div>
<script src="https://cdn.jsdelivr.net/npm/bootstrap@5.3.0/dist/js/bootstrap.bundle.min.js"></script>
</body>
</html>
